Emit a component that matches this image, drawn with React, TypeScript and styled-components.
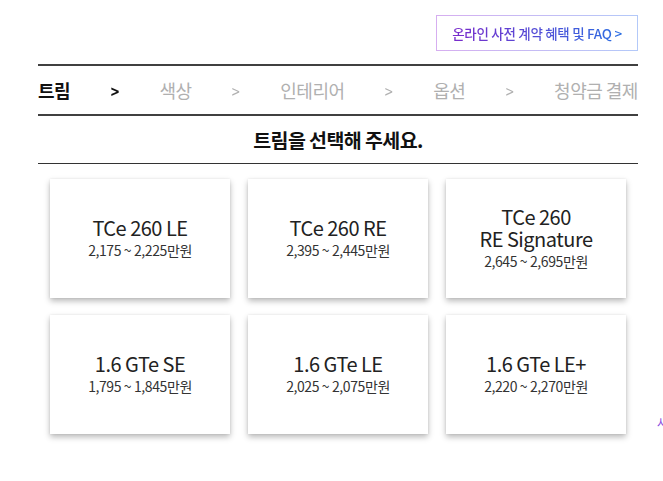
import { Fragment } from "react";
import styled, { createGlobalStyle } from "styled-components";

const trims = [
  { name: ["TCe 260 LE"], price: "2,175 ~ 2,225만원" },
  { name: ["TCe 260 RE"], price: "2,395 ~ 2,445만원" },
  { name: ["TCe 260", "RE Signature"], price: "2,645 ~ 2,695만원" },
  { name: ["1.6 GTe SE"], price: "1,795 ~ 1,845만원" },
  { name: ["1.6 GTe LE"], price: "2,025 ~ 2,075만원" },
  { name: ["1.6 GTe LE+"], price: "2,220 ~ 2,270만원" },
];

const steps = ["트림", "색상", "인테리어", "옵션", "청약금 결제"];

export default function App() {
  return (
    <Page>
      <GlobalStyle />
      <TopBar>
        <FaqButton>
          <GradientText>온라인 사전 계약 혜택 및 FAQ &gt;</GradientText>
        </FaqButton>
      </TopBar>
      <Steps>
        {steps.map((step, i) => (
          <Fragment key={step}>
            <Step active={i === 0}>{step}</Step>
            {i < steps.length - 1 && <Arrow active={i === 0}>&gt;</Arrow>}
          </Fragment>
        ))}
      </Steps>
      <Heading>트림을 선택해 주세요.</Heading>
      <CardGrid>
        {trims.map((trim) => (
          <Card key={trim.price}>
            {trim.name.map((line) => (
              <CardTitle key={line}>{line}</CardTitle>
            ))}
            <CardPrice>{trim.price}</CardPrice>
          </Card>
        ))}
      </CardGrid>
      <EdgeHint>사</EdgeHint>
    </Page>
  );
}

const GlobalStyle = createGlobalStyle`
  html, body {
    margin: 0;
    padding: 0;
    background: #fff;
    overflow: hidden;
  }
  body {
    font-family: "Noto Sans CJK KR", "Noto Sans", sans-serif;
    color: #222;
  }
`;

const Page = styled.div`
  position: relative;
  width: 663px;
  height: 481px;
  padding: 0 25px 0 38px;
  box-sizing: border-box;
  overflow: hidden;
`;

const TopBar = styled.div`
  display: flex;
  justify-content: flex-end;
  padding-top: 15px;
  height: 64px;
  box-sizing: border-box;
`;

const FaqButton = styled.div`
  width: 202px;
  height: 36px;
  box-sizing: border-box;
  border: 1px solid transparent;
  background:
    linear-gradient(#fff, #fff) padding-box,
    linear-gradient(90deg, #d6aef0, #b3c9f9) border-box;
  display: flex;
  align-items: center;
  justify-content: center;
`;

const GradientText = styled.span`
  font-size: 13.5px;
  font-weight: 500;
  letter-spacing: -0.3px;
  background: linear-gradient(90deg, #7a2bcb, #2c6fe2);
  -webkit-background-clip: text;
  background-clip: text;
  color: transparent;
`;

const Steps = styled.div`
  display: flex;
  justify-content: space-between;
  align-items: center;
  height: 52px;
  border-top: 2px solid #404040;
  border-bottom: 2px solid #404040;
  box-sizing: border-box;
  white-space: nowrap;
`;

const Step = styled.span<{ active?: boolean }>`
  font-size: 18px;
  font-weight: ${(p) => (p.active ? 700 : 400)};
  color: ${(p) => (p.active ? "#111" : "#b0b0b0")};
  letter-spacing: -0.5px;
`;

const Arrow = styled.span<{ active?: boolean }>`
  font-size: 17px;
  font-weight: ${(p) => (p.active ? 700 : 400)};
  color: ${(p) => (p.active ? "#111" : "#b0b0b0")};
  transform: scaleX(0.85);
`;

const Heading = styled.h2`
  margin: 0;
  height: 48px;
  box-sizing: border-box;
  border-bottom: 1px solid #333;
  display: flex;
  align-items: center;
  justify-content: center;
  font-size: 19.5px;
  font-weight: 700;
  color: #111;
  letter-spacing: -0.6px;
`;

const CardGrid = styled.div`
  display: grid;
  grid-template-columns: repeat(3, 180px);
  grid-auto-rows: 119px;
  column-gap: 18px;
  row-gap: 17px;
  padding: 15px 0 0 12px;
`;

const Card = styled.div`
  background: #fff;
  box-shadow: 0 3px 6px rgba(0, 0, 0, 0.28), 0 0 2px rgba(0, 0, 0, 0.08);
  display: flex;
  flex-direction: column;
  align-items: center;
  justify-content: center;
`;

const CardTitle = styled.div`
  font-size: 20px;
  line-height: 22px;
  color: #222;
  letter-spacing: -0.5px;
`;

const CardPrice = styled.div`
  font-size: 14px;
  line-height: 22px;
  color: #333;
  letter-spacing: -0.4px;
`;

const EdgeHint = styled.span`
  position: absolute;
  left: 657px;
  top: 414px;
  font-size: 12px;
  color: #8a4de0;
`;
